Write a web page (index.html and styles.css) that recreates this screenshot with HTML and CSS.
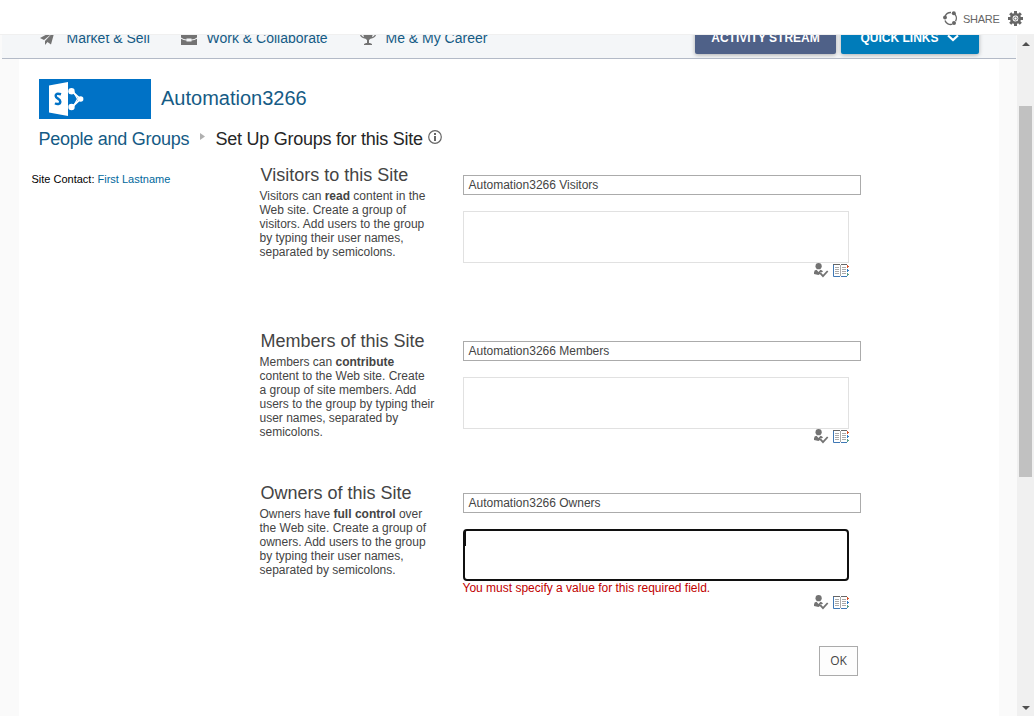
FILE: index.html
```html
<!DOCTYPE html>
<html lang="en">
<head>
<meta charset="utf-8">
<title>Set Up Groups for this Site</title>
<link rel="stylesheet" href="styles.css">
</head>
<body>
<svg class="defs" width="0" height="0">
  <symbol id="check-user" viewBox="0 0 15 15">
    <circle cx="4.600" cy="3.200" r="3.100" fill="#737373"/>
    <path d="M0 11V9.500Q0 7 2.500 6.700L4.500 9l2-2.300q2 .3 2.500 2L7 9.500 6 9v2L4.500 12z" fill="#737373"/>
    <path d="M6 9.800l3 3.400L13.700 8" fill="none" stroke="#737373" stroke-width="1.800"/>
  </symbol>
  <symbol id="book" viewBox="0 0 16 13">
    <path d="M0 .5h7M8 .5h6" stroke="#666" fill="none"/>
    <path d="M.5 1v11.5H7M8 12.5h6" stroke="#3f78b5" fill="none"/>
    <path d="M7.500 1v11" stroke="#aaa" fill="none"/>
    <path d="M2 3.500h4M2 5.500h4M2 7.500h4M2 9.500h4M9 3.500h4M9 5.500h4M9 7.500h4M9 9.500h4" stroke="#aaa" fill="none"/>
    <path d="M14 1h1v1h1v1h-1v1h-1z" fill="#d5532c"/>
    <path d="M14 5h1v1h1v1h-1v1h-1z" fill="#2e7cc4"/>
    <path d="M14 9h1v1h1v1h-1v1h-1z" fill="#5a9e8b"/>
  </symbol>
</svg>
<header class="topbar">
  <svg class="share-icon" width="15" height="15" viewBox="0 0 15 15">
    <path d="M2.200 5A6 6 0 0 1 8 1.500M10.800 2.400A6 6 0 0 1 12.600 10.200M9.300 13.200A6 6 0 0 1 2 9.500" fill="none" stroke="#666" stroke-width="1.400"/>
    <circle cx="2" cy="6.500" r="1.900" fill="#666"/><circle cx="10.800" cy="2.300" r="2" fill="#666"/><circle cx="11" cy="12" r="2" fill="#666"/>
  </svg>
  <span class="share">SHARE</span>
  <svg class="gear" width="15" height="15" viewBox="0 0 15 15">
    <g fill="#666"><path d="M6 0h3v15H6zM0 6h15v3H0z"/><path d="M6 0h3v15H6zM0 6h15v3H0z" transform="rotate(45 7.500 7.500)"/></g>
    <circle cx="7.500" cy="7.500" r="4.200" fill="#fff" stroke="#666" stroke-width="2.600"/>
    <circle cx="7.500" cy="7.500" r="1.600" fill="none" stroke="#666" stroke-width="1"/>
  </svg>
</header>
<div class="viewport">
  <div class="page">
    <nav class="nav">
      <div class="nav-inner">
        <a class="item market"><svg width="15" height="16" viewBox="0 0 15 16"><path d="M15 0L0 8l4 2L12 3.500 5 11v4l2.500-3 3.500 2.500z" fill="#737373"/></svg>Market &amp; Sell</a>
        <a class="item work"><svg width="16" height="16" viewBox="0 0 16 16"><path d="M4 3V1h8v2h4v4.500q-2.500 2-5.500 2V8.500h-5v1q-3 0-5.500-2V3zM0 8.700q2.500 1.700 5.500 1.900v1h5v-1Q13.500 10.400 16 8.700V15H0z" fill="#737373"/></svg>Work &amp; Collaborate</a>
        <a class="item career"><svg width="18" height="16" viewBox="0 0 18 16"><path d="M4 0h10v3h3.500Q17 8 11.500 8.800L10 10v3h1l2 1v1H5v-1l2-1h1v-3L6.500 8.800Q1 8 .5 3H4zM2 4.500q.7 2 3 2.700l-.7-2.700zM16 4.500h-2.300L13 7.200q2.300-.7 3-2.700z" fill="#737373"/></svg>Me &amp; My Career</a>
        <span class="btn activity">ACTIVITY STREAM</span>
        <span class="btn quick">QUICK LINKS<svg width="12" height="8" viewBox="0 0 12 8"><path d="M1 1.500l5 4.500 5-4.500" fill="none" stroke="#fff" stroke-width="2.200"/></svg></span>
      </div>
    </nav>
    <main class="sheet">
      <div class="brand">
        <div class="logo">
          <svg width="112" height="40" viewBox="0 0 112 40">
            <path d="M33 12.300L41.500 20 33 28.200" fill="none" stroke="#fff" stroke-width="1.800"/>
            <path d="M34 12l4.500 8-4.500 8" fill="none" stroke="#fff" stroke-width="1.200"/>
            <circle cx="32.500" cy="12.300" r="3.200" fill="#fff"/><circle cx="41.700" cy="20" r="2.700" fill="#fff"/><circle cx="32.500" cy="28" r="3.200" fill="#fff"/>
            <path d="M30 15.500q6 .5 6 4.500t-6 4.500z" fill="#0072c6"/>
            <path d="M10 6.500L29 3v34L10 33.500z" fill="#fff"/>
            <path d="M22 15.300Q16.500 13.600 16.700 17c.1 2.800 4.700 2.600 4.600 5.700-.1 2.900-3.300 2.700-5.300 1.500" fill="none" stroke="#0072c6" stroke-width="2.500"/>
          </svg>
        </div>
        <a class="site-name">Automation3266</a>
      </div>
      <h1 class="crumbs"><a>People and Groups</a><svg class="arrow" width="5" height="7" viewBox="0 0 5 7"><path d="M0 0l5 3.500L0 7z" fill="#b0b0b0"/></svg><span class="current">Set Up Groups for this Site</span><svg class="info" width="14" height="14" viewBox="0 0 14 14"><circle cx="7" cy="7" r="6.300" fill="none" stroke="#666" stroke-width="1.200"/><path d="M6 3h2v2H6zM6 6h2v5H6z" fill="#666"/></svg></h1>
      <div class="columns">
        <aside class="contact">Site Contact: <a>First Lastname</a></aside>
        <form class="groups">
          <section class="group visitors">
            <div class="text"><h2>Visitors to this Site</h2>
              <p>Visitors can <b>read</b> content in the<br>Web site. Create a group of<br>visitors. Add users to the group<br>by typing their user names,<br>separated by semicolons.</p></div>
            <div class="fields"><div class="name">Automation3266 Visitors</div><div class="people"></div>
              <div class="tools"><svg width="15" height="15"><use href="#check-user"/></svg><svg width="16" height="13"><use href="#book"/></svg></div></div>
          </section>
          <section class="group members">
            <div class="text"><h2>Members of this Site</h2>
              <p>Members can <b>contribute</b><br>content to the Web site. Create<br>a group of site members. Add<br>users to the group by typing their<br>user names, separated by<br>semicolons.</p></div>
            <div class="fields"><div class="name">Automation3266 Members</div><div class="people"></div>
              <div class="tools"><svg width="15" height="15"><use href="#check-user"/></svg><svg width="16" height="13"><use href="#book"/></svg></div></div>
          </section>
          <section class="group owners">
            <div class="text"><h2>Owners of this Site</h2>
              <p>Owners have <b>full control</b> over<br>the Web site. Create a group of<br>owners. Add users to the group<br>by typing their user names,<br>separated by semicolons.</p></div>
            <div class="fields"><div class="name">Automation3266 Owners</div><div class="people focused"><i class="caret"></i></div>
              <div class="error">You must specify a value for this required field.</div>
              <div class="tools"><svg width="15" height="15"><use href="#check-user"/></svg><svg width="16" height="13"><use href="#book"/></svg></div></div>
          </section>
          <div class="actions"><span class="ok">OK</span></div>
        </form>
      </div>
    </main>
  </div>
  <div class="scrollbar">
    <svg width="8" height="4" viewBox="0 0 8 4"><path d="M0 4l4-4 4 4z" fill="#505050"/></svg>
    <div class="thumb"></div>
    <svg class="down" width="8" height="4" viewBox="0 0 8 4"><path d="M0 0l4 4 4-4z" fill="#505050"/></svg>
  </div>
</div>
</body>
</html>
```
FILE: styles.css
```css
* { box-sizing: border-box; }
body { margin: 0; width: 1034px; height: 716px; overflow: hidden; background: #fff; color: #444; font: 12px/14px "Liberation Sans", Arial, sans-serif; }
svg { display: block; flex: none; }
h1, h2, p { margin: 0; font-weight: normal; }
.defs { position: absolute; }
.topbar { height: 34px; display: flex; justify-content: flex-end; align-items: flex-start; padding: 11px 11px 0 0; color: #666; }
.share { font-size: 11px; letter-spacing: -.25px; line-height: 16px; margin: 0 8px 0 5px; white-space: nowrap; width: 37px; }
.viewport { display: flex; height: 682px; border-top: 1px solid #f0f0f0; }
.page { width: 1017px; background: #fafafa; overflow: hidden; }
.nav { height: 24px; margin: 0 1px 0 2px; background: #f4f6f8; border-bottom: 1px solid #b3bac7; overflow: hidden; }
.nav-inner { display: flex; align-items: flex-start; margin-top: -12px; padding-left: 38px; }
.item { display: flex; align-items: center; height: 30px; font-size: 14px; line-height: 30px; color: #155b85; white-space: nowrap; }
.item svg { margin-top: -1px; }
.market { width: 141px; gap: 11.5px; }
.work { width: 177.5px; gap: 9.5px; }
.career { width: 336.5px; gap: 9px; }
.btn { display: flex; align-items: center; justify-content: center; height: 31px; border-radius: 2px; color: #fff; font-weight: bold; line-height: 28px; padding-bottom: 2px; box-shadow: 0 1px 4px rgba(0,0,0,.3); white-space: nowrap; }
.activity { width: 141px; background: #4f6188; margin-right: 5px; }
.quick { width: 138px; background: #007cba; gap: 8px; padding-right: 1px; }
.sheet { width: 980px; height: 657px; margin-left: 19px; background: #fff; padding-top: 20px; }
.brand { display: flex; gap: 10px; height: 40px; margin-left: 20px; }
.logo { width: 112px; height: 40px; background: #0072c6; }
.site-name { font-size: 20px; line-height: 38px; color: #155b85; }
.crumbs { display: flex; height: 45px; margin-left: 20px; font-size: 18px; letter-spacing: -.25px; line-height: 40px; color: #262626; white-space: nowrap; }
.crumbs a { color: #155b85; width: 161px; margin-left: -.5px; }
.current { width: 208.500px; }
.arrow { margin: 14px 11px 0 0; }
.info { margin: 11px 0 0 4px; }
.columns { display: flex; }
.contact { width: 240.500px; padding: 9px 0 0 12.500px; font-size: 11px; line-height: 13px; color: #000; white-space: nowrap; }
.contact a { color: #00689c; }
.group { display: flex; }
.visitors { height: 166px; }
.members, .owners { height: 152px; }
.text { width: 203.500px; white-space: nowrap; }
h2 { font-size: 18px; line-height: 22px; padding-left: 1px; margin-bottom: 3px; }
.fields { width: 398px; padding-top: 11px; }
.name { height: 20px; border: 1px solid #ababab; padding: 2px 4.500px; line-height: 14px; background: #fff; }
.people { width: 386px; height: 52px; margin-top: 16px; border: 1px solid #e1e1e1; }
.focused { border: 2px solid #101010; border-radius: 4px; }
.caret { display: block; width: 1px; height: 15px; background: #101010; }
.tools { display: flex; justify-content: flex-end; gap: 4px; width: 386px; align-items: flex-start; }
.tools svg + svg { margin-top: 1px; }
.error { height: 14px; margin-left: -.5px; color: #bf0000; }
.actions { display: flex; justify-content: flex-end; width: 598.500px; padding-top: 12px; }
.ok { width: 39px; height: 30px; border: 1px solid #ababab; background: #fdfdfd; text-align: center; font: 12px/28px "Open Sans", sans-serif; }
.scrollbar { width: 17px; background: #f0f0f0; display: flex; flex-direction: column; align-items: center; padding: 7px 0 6px; }
.thumb { width: 13px; height: 371px; margin-top: 60px; background: #c1c1c1; }
.down { margin-top: auto; }
```
